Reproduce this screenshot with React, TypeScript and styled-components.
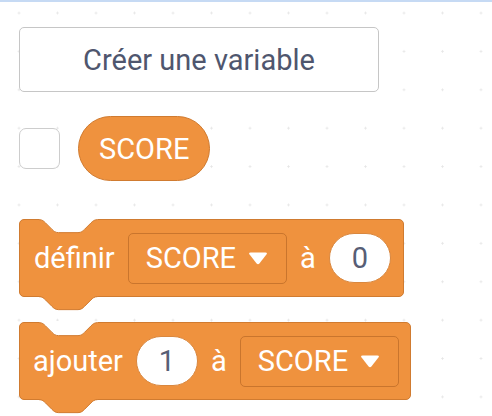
import React from "react";
import styled, { createGlobalStyle } from "styled-components";

const S = 1.625;
const ORANGE = "#ef923e";
const EDGE = "#d07b30";
const NOTCH = "c2,0 3,1 4,2 l4,4 c1,1 2,2 4,2 h12 c2,0 3,-1 4,-2 l4,-4 c1,-1 2,-2 4,-2";

const Global = createGlobalStyle`
  html, body {
    margin: 0;
    padding: 0;
  }
  body {
    background-color: #ffffff;
    background-image: radial-gradient(circle, #e6e6e6 0.9px, rgba(255,255,255,0) 1.3px);
    background-size: 38.5px 38.4px;
    background-position: -0.25px -6.2px;
    font-family: Roboto, "Liberation Sans", Arial, sans-serif;
  }
`;

const Flyout = styled.div`
  box-sizing: border-box;
  min-height: 416px;
  border-top: 2px solid #c6daf4;
  padding: 25px 0 0 19px;
  display: flex;
  flex-direction: column;
  align-items: flex-start;
`;

const MakeButton = styled.button`
  box-sizing: border-box;
  width: 360px;
  height: 65px;
  border: 1px solid #c6c6c6;
  border-radius: 5px;
  background: #ffffff;
  font-family: Roboto, "Liberation Sans", Arial, sans-serif;
  font-size: 29px;
  color: #4f566e;
  padding: 0;
  cursor: pointer;
`;

const VarRow = styled.div`
  display: flex;
  align-items: center;
  gap: 18px;
  margin-top: 24px;
`;

const CheckBox = styled.div`
  box-sizing: border-box;
  width: 41px;
  height: 41px;
  border: 1.5px solid #cdcdcd;
  border-radius: 7px;
  background: #ffffff;
`;

const Reporter = styled.div`
  box-sizing: border-box;
  height: 65px;
  padding: 0 20px;
  display: flex;
  align-items: center;
  background: ${ORANGE};
  border: 1px solid ${EDGE};
  border-radius: 33px;
  color: #ffffff;
  font-size: 29px;
`;

const Stack = styled.div`
  display: flex;
  flex-direction: column;
  align-items: flex-start;
  gap: 25px;
  margin-top: 38px;
`;

const Block = styled.div<{ $padL: number; $padR: number }>`
  position: relative;
  box-sizing: border-box;
  height: 78px;
  display: flex;
  align-items: center;
  gap: 13px;
  padding: 0 ${(p) => p.$padR}px 0 ${(p) => p.$padL}px;
  background: ${ORANGE};
  border: 1px solid ${EDGE};
  border-radius: 5px;
`;

const Label = styled.span`
  color: #ffffff;
  font-size: 29px;
  line-height: 1;
  white-space: nowrap;
`;

const Dropdown = styled.div`
  box-sizing: border-box;
  height: 51px;
  padding: 0 18px 0 17px;
  display: flex;
  align-items: center;
  gap: 12px;
  border: 1px solid #c9752d;
  border-radius: 5px;
  background: ${ORANGE};
`;

const Oval = styled.div`
  box-sizing: border-box;
  height: 50px;
  min-width: 62px;
  padding: 0 16px;
  display: flex;
  align-items: center;
  justify-content: center;
  background: #ffffff;
  border: 1px solid #d9873e;
  border-radius: 25px;
  color: #575e75;
  font-size: 29px;
`;

const Notch = styled.svg<{ $bottom?: boolean }>`
  position: absolute;
  left: ${12 * S - 1}px;
  width: ${36 * S}px;
  height: ${10 * S}px;
  overflow: visible;
  top: ${(p) => (p.$bottom ? `calc(100% + ${0.5 - S}px)` : `${-0.5 - S}px`)};
`;

const NotchShape: React.FC<{ bottom?: boolean }> = ({ bottom }) => (
  <Notch $bottom={bottom} viewBox="0 -1 36 10">
    <path d={`M0,-1 L0,0 ${NOTCH} L36,-1 Z`} fill={bottom ? ORANGE : "#ffffff"} />
    <path
      d={`M0,0 ${NOTCH}`}
      fill="none"
      stroke={EDGE}
      strokeWidth={1}
      vectorEffect="non-scaling-stroke"
    />
  </Notch>
);

const Arrow = () => (
  <svg width="20" height="13" viewBox="0 0 20 13">
    <path
      d="M2.6,0.6 H17.4 Q19.8,0.6 18.4,2.6 L11.4,11.6 Q10,13.1 8.6,11.6 L1.6,2.6 Q0.2,0.6 2.6,0.6 Z"
      fill="#ffffff"
    />
  </svg>
);

const VarMenu: React.FC<{ name: string }> = ({ name }) => (
  <Dropdown>
    <Label>{name}</Label>
    <Arrow />
  </Dropdown>
);

export default function App() {
  return (
    <>
      <Global />
      <Flyout>
        <MakeButton>Créer une variable</MakeButton>
        <VarRow>
          <CheckBox />
          <Reporter>SCORE</Reporter>
        </VarRow>
        <Stack>
          <Block $padL={14} $padR={12}>
            <NotchShape />
            <Label>définir</Label>
            <VarMenu name="SCORE" />
            <Label>à</Label>
            <Oval>0</Oval>
            <NotchShape bottom />
          </Block>
          <Block $padL={13} $padR={11}>
            <NotchShape />
            <Label>ajouter</Label>
            <Oval>1</Oval>
            <Label>à</Label>
            <VarMenu name="SCORE" />
            <NotchShape bottom />
          </Block>
        </Stack>
      </Flyout>
    </>
  );
}
